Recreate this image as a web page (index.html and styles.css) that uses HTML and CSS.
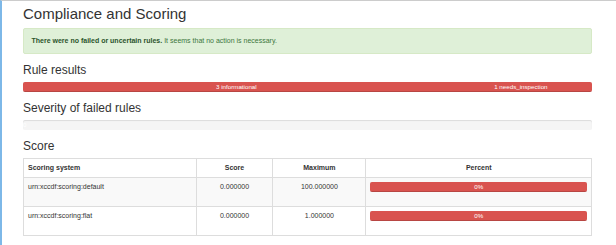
FILE: index.html
```html
<!DOCTYPE html>
<html lang="en">
<head>
	<meta charset="UTF-8">
	<title>Compliance and Scoring</title>
	<link rel="stylesheet" href="styles.css">
</head>
<body>
	<div class="frame">
		<div class="page">
			<h2 class="title">Compliance and Scoring</h2>
			<div class="alert">
				<strong>There were no failed or uncertain rules.</strong> It seems that no action is necessary.
			</div>

			<h3 class="section">Rule results</h3>
			<div class="progress">
				<div class="bar" style="width: 75%;">3 informational</div>
				<div class="bar" style="width: 25%;">1 needs_inspection</div>
			</div>

			<h3 class="section">Severity of failed rules</h3>
			<div class="progress">
				<div class="bar bar-empty" style="width: 0%;">0</div>
			</div>

			<h3 class="section">Score</h3>
			<table class="scores">
				<thead>
					<tr>
						<th class="col-system">Scoring system</th>
						<th class="col-score">Score</th>
						<th class="col-max">Maximum</th>
						<th class="col-percent">Percent</th>
					</tr>
				</thead>
				<tbody>
					<tr>
						<td>urn:xccdf:scoring:default</td>
						<td class="num">0.000000</td>
						<td class="num">100.000000</td>
						<td>
							<div class="progress">
								<div class="bar" style="width: 100%;">0%</div>
							</div>
						</td>
					</tr>
					<tr>
						<td>urn:xccdf:scoring:flat</td>
						<td class="num">0.000000</td>
						<td class="num">1.000000</td>
						<td>
							<div class="progress">
								<div class="bar" style="width: 100%;">0%</div>
							</div>
						</td>
					</tr>
				</tbody>
			</table>
		</div>
	</div>
</body>
</html>
```

FILE: styles.css
```css
* {
	margin: 0;
	padding: 0;
	box-sizing: border-box;
}
body {
	font-family: "Liberation Sans", Arial, sans-serif;
	font-size: 7px;
	line-height: 10px;
	color: #333;
	background: #fff;
}
.frame {
	height: 100vh;
	overflow: hidden;
	border-left: 2px solid #7db8e8;
	border-top: 1px solid #ccc;
}
.page {
	padding: 0 24px 0 21px;
}
.title {
	font-size: 15px;
	font-weight: normal;
	line-height: 1.1;
	margin: 5px 0 5px;
}
.alert {
	background: #dff0d8;
	border: 1px solid #d6e9c6;
	border-radius: 2px;
	color: #3c763d;
	padding: 7px 7.5px;
	margin-bottom: 10px;
}
.alert strong {
	color: #2b542c;
}
.section {
	font-size: 12px;
	font-weight: normal;
	line-height: 1.1;
	margin: 10px 0 5px;
}
.alert + .section {
	margin-top: 0;
}
.progress {
	display: flex;
	height: 10px;
	margin-bottom: 10px;
	background: #f5f5f5;
	border-radius: 2px;
	box-shadow: inset 0 1px 1px rgba(0, 0, 0, 0.1);
	overflow: hidden;
}
.progress + .section {
	margin-top: 0;
}
.bar {
	flex: none;
	background: #d9534f;
	color: #fff;
	font-size: 6.2px;
	line-height: 10px;
	text-align: center;
	white-space: nowrap;
	box-shadow: inset 0 -1px 0 rgba(0, 0, 0, 0.15);
}
.bar-empty {
	overflow: visible;
	text-align: left;
	background: none;
	box-shadow: none;
}
.scores {
	width: 100%;
	table-layout: fixed;
	border-collapse: collapse;
	border: 1px solid #ddd;
}
.scores th,
.scores td {
	padding: 4px;
	border: 1px solid #ddd;
	vertical-align: top;
	text-align: left;
}
.scores th {
	font-weight: bold;
	vertical-align: bottom;
	text-align: center;
}
.scores th.col-system {
	text-align: left;
}
.col-system {
	width: 30.4%;
}
.col-score {
	width: 13.5%;
}
.col-max {
	width: 16.4%;
}
.col-percent {
	width: 39.7%;
}
.scores tbody tr:nth-child(odd) {
	background: #f9f9f9;
}
.scores td.num {
	text-align: center;
}
```
